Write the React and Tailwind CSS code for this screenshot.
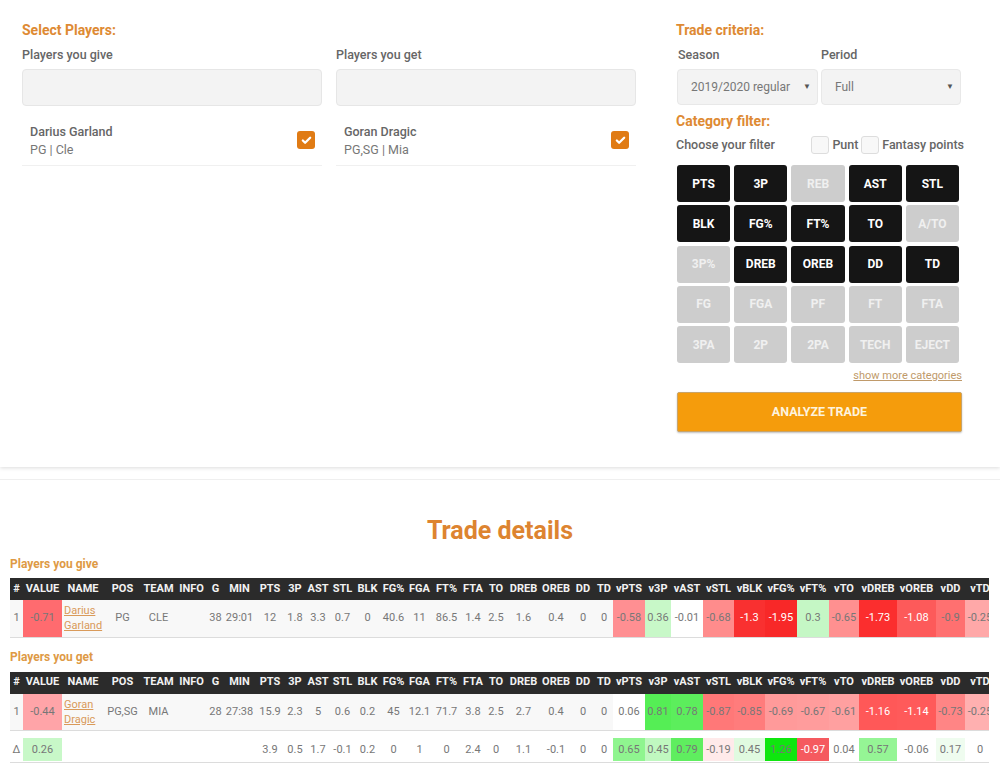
import { Check } from "lucide-react";

const categories = [
  ["PTS", 1], ["3P", 1], ["REB", 0], ["AST", 1], ["STL", 1],
  ["BLK", 1], ["FG%", 1], ["FT%", 1], ["TO", 1], ["A/TO", 0],
  ["3P%", 0], ["DREB", 1], ["OREB", 1], ["DD", 1], ["TD", 1],
  ["FG", 0], ["FGA", 0], ["PF", 0], ["FT", 0], ["FTA", 0],
  ["3PA", 0], ["2P", 0], ["2PA", 0], ["TECH", 0], ["EJECT", 0],
];

const columns = [
  ["#", 13], ["VALUE", 39], ["NAME", 42], ["POS", 37], ["TEAM", 35], ["INFO", 31], ["G", 17], ["MIN", 31],
  ["PTS", 30], ["3P", 20], ["AST", 26], ["STL", 23], ["BLK", 27], ["FG%", 25], ["FGA", 27], ["FT%", 27],
  ["FTA", 26], ["TO", 20], ["DREB", 35], ["OREB", 30], ["DD", 24], ["TD", 18], ["vPTS", 32], ["v3P", 26],
  ["vAST", 32], ["vSTL", 31], ["vBLK", 31], ["vFG%", 32], ["vFT%", 32], ["vTO", 30], ["vDREB", 38],
  ["vOREB", 39], ["vDD", 29], ["vTD", 30],
];

// [value, background class, white text]
const garland = [
  ["1"], ["-0.71", "bg-[#ff6b6f]"], ["Darius Garland"], ["PG"], ["CLE"], [""], ["38"], ["29:01"],
  ["12"], ["1.8"], ["3.3"], ["0.7"], ["0"], ["40.6"], ["11"], ["86.5"], ["1.4"], ["2.5"], ["1.6"], ["0.4"], ["0"], ["0"],
  ["-0.58", "bg-[#ff8f92]"], ["0.36", "bg-[#c8f8c8]"], ["-0.01", "bg-white"], ["-0.68", "bg-[#ff8c8c]"],
  ["-1.3", "bg-[#f93030]", 1], ["-1.95", "bg-[#f82828]", 1], ["0.3", "bg-[#c5f7c5]"], ["-0.65", "bg-[#ff9090]"],
  ["-1.73", "bg-[#fb2e2e]", 1], ["-1.08", "bg-[#fd5a5a]", 1], ["-0.9", "bg-[#ff7070]"], ["-0.25", "bg-[#ffa8a8]"],
];

const dragic = [
  ["1"], ["-0.44", "bg-[#ffa4a8]"], ["Goran Dragic"], ["PG,SG"], ["MIA"], [""], ["28"], ["27:38"],
  ["15.9"], ["2.3"], ["5"], ["0.6"], ["0.2"], ["45"], ["12.1"], ["71.7"], ["3.8"], ["2.5"], ["2.7"], ["0.4"], ["0"], ["0"],
  ["0.06", "bg-white"], ["0.81", "bg-[#55ee55]"], ["0.78", "bg-[#5cee5c]"], ["-0.87", "bg-[#ff7878]"],
  ["-0.85", "bg-[#ff7c7c]"], ["-0.69", "bg-[#ff9a9a]"], ["-0.67", "bg-[#ff9c9c]"], ["-0.61", "bg-[#ffa0a0]"],
  ["-1.16", "bg-[#ff5858]", 1], ["-1.14", "bg-[#ff5a5a]", 1], ["-0.73", "bg-[#ff8585]"], ["-0.25", "bg-[#ffb0b0]"],
];

const delta = [
  ["Δ"], ["0.26", "bg-[#c8f8c8]"], [""], [""], [""], [""], [""], [""],
  ["3.9"], ["0.5"], ["1.7"], ["-0.1"], ["0.2"], ["0"], ["1"], ["0"], ["2.4"], ["0"], ["1.1"], ["-0.1"], ["0"], ["0"],
  ["0.65", "bg-[#8ff58f]"], ["0.45", "bg-[#c0f8c0]"], ["0.79", "bg-[#5fee5f]"], ["-0.19", "bg-[#ffeaea]"],
  ["0.45", "bg-[#e0fae0]"], ["1.26", "bg-[#0fe60f]"], ["-0.97", "bg-[#f55a5f]", 1], ["0.04"],
  ["0.57", "bg-[#95f595]"], ["-0.06"], ["0.17", "bg-[#effcef]"], ["0"],
];

const PlayerCard = ({ name, info }) => (
  <div className="flex items-center justify-between h-[53px] border-b border-[#f0f0f0] pl-2 pr-[7px]">
    <div className="pt-[3px]">
      <div className="text-[12.5px] font-medium leading-[18px] text-[#666]">{name}</div>
      <div className="text-[12.5px] leading-[18px] text-[#777]">{info}</div>
    </div>
    <span className="flex items-center justify-center w-[18px] h-[18px] mt-[2px] rounded-[3px] bg-[#e07b14]">
      <Check size={11} strokeWidth={5} color="#fff" />
    </span>
  </div>
);

const SelectBox = ({ label, width, pad }) => (
  <div className={`flex items-center justify-between h-9 rounded-[4px] border border-[#e8e8e8] bg-[#f3f3f3] pr-[6px] text-xs text-[#777] ${width} ${pad}`}>
    <span>{label}</span>
    <span className="text-[8px] text-[#555]">▼</span>
  </div>
);

const StatTable = ({ rows }) => (
  <div className="w-[979px] overflow-hidden">
    <table className="table-fixed border-collapse w-[985px] text-[11px] text-center">
      <colgroup>
        {columns.map(([name, width]) => (
          <col key={name} style={{ width }} />
        ))}
      </colgroup>
      <thead>
        <tr className="h-[22px] bg-[#2b2b2b] text-[#f2f2f2]">
          {columns.map(([name]) => (
            <th key={name} className="p-0 font-bold whitespace-nowrap">{name}</th>
          ))}
        </tr>
      </thead>
      <tbody>
        {rows.map((row, r) => (
          <tr key={r} className="h-[37px] bg-[#f8f8f8] border-b border-[#dcdcdc] text-[#777]">
            {row.map(([value, bg, white], i) => (
              <td key={i} className={`p-0 whitespace-nowrap ${bg || ""} ${white ? "text-white" : ""}`}>
                {i === 2 ? (
                  <a href="#" className="block w-[40px] ml-[2px] whitespace-normal text-left leading-[15px] underline text-[#d99a5a]">{value}</a>
                ) : (
                  value
                )}
              </td>
            ))}
          </tr>
        ))}
      </tbody>
    </table>
  </div>
);

const DeltaTable = () => (
  <div className="w-[979px] overflow-hidden">
    <table className="table-fixed border-collapse w-[985px] text-[11px] text-center">
      <colgroup>
        {columns.map(([name, width]) => (
          <col key={name} style={{ width }} />
        ))}
      </colgroup>
      <tbody>
        <tr className="border-b border-[#dcdcdc] text-[#777]">
          {delta.map(([value, bg, white], i) => (
            <td key={i} className="p-0 pt-[7px] pb-px whitespace-nowrap">
              <div className={`h-[23px] leading-[23px] ${bg || ""} ${white ? "text-white" : ""}`}>{value}</div>
            </td>
          ))}
        </tr>
      </tbody>
    </table>
  </div>
);

export default function App() {
  return (
    <div className="h-[763px] overflow-hidden bg-white font-[family-name:Roboto,sans-serif]">
      <section className="flex h-[467px] shadow-[0_1px_4px_rgba(0,0,0,0.14)] pt-[22px] pl-[22px]">
        <div className="w-[614px]">
          <h2 className="text-sm font-bold leading-4 text-[#de8a33]">Select Players:</h2>
          <div className="grid grid-cols-2 gap-x-[14px] mt-[9px]">
            {[
              ["Players you give", "Darius Garland", "PG | Cle"],
              ["Players you get", "Goran Dragic", "PG,SG | Mia"],
            ].map(([label, name, info]) => (
              <div key={label}>
                <label className="block text-[12.5px] font-medium leading-4 text-[#666]">{label}</label>
                <div className="h-[37px] mt-[6px] rounded-[4px] border border-[#e6e6e6] bg-[#f3f3f3]" />
                <div className="mt-[7px]">
                  <PlayerCard name={name} info={info} />
                </div>
              </div>
            ))}
          </div>
        </div>

        <div className="w-[288px] ml-[40px]">
          <h2 className="text-sm font-bold leading-4 text-[#de8a33]">Trade criteria:</h2>
          <div className="flex gap-[3px] mt-[9px] ml-px">
            <div className="w-[141px]">
              <label className="block pl-px text-[12.5px] font-medium leading-4 text-[#666]">Season</label>
              <div className="mt-[6px]">
                <SelectBox label="2019/2020 regular" width="w-[141px]" pad="pl-[13px]" />
              </div>
            </div>
            <div className="w-[140px]">
              <label className="block text-[12.5px] font-medium leading-4 text-[#666]">Period</label>
              <div className="mt-[6px]">
                <SelectBox label="Full" width="w-[140px]" pad="pl-[13px]" />
              </div>
            </div>
          </div>

          <h2 className="mt-2 text-sm font-bold leading-4 text-[#de8a33]">Category filter:</h2>
          <div className="flex items-center h-[18px] mt-[7px] text-[12.5px] font-medium text-[#666]">
            <span className="w-[136px]">Choose your filter</span>
            <span className="w-[18px] h-[18px] rounded-[3px] border border-[#ddd] bg-[#f8f8f8]" />
            <span className="ml-[3px] w-[29px]">Punt</span>
            <span className="w-[18px] h-[18px] rounded-[3px] border border-[#ddd] bg-[#f8f8f8]" />
            <span className="ml-[3px] whitespace-nowrap">Fantasy points</span>
          </div>

          <div className="grid grid-cols-5 gap-x-1 gap-y-[3.25px] w-[282px] mt-[11px] ml-px">
            {categories.map(([name, active]) => (
              <button
                key={name}
                className={`h-[37px] rounded-[3px] text-xs font-bold ${
                  active ? "bg-[#151515] text-white" : "bg-[#cdcdcd] text-[#f0f0f0]"
                }`}
              >
                {name}
              </button>
            ))}
          </div>

          <div className="w-[286px] mt-[6px] text-right text-[11px] leading-[14px] underline text-[#c09a6a]">
            show more categories
          </div>
          <button className="block w-[285px] h-10 mt-[9px] ml-px rounded-[2px] border border-[#c9a469] bg-[#f59c0c] text-[12.5px] font-bold text-[#fdf3df] shadow-[0_1px_2px_rgba(0,0,0,0.25)]">
            ANALYZE TRADE
          </button>
        </div>
      </section>

      <section className="mt-3 border-t border-[#efefef] pl-[10px]">
        <h1 className="mt-[36px] text-center text-[25px] leading-[30px] font-bold text-[#dd8430] -ml-[10px]">Trade details</h1>
        <h3 className="mt-[10px] text-xs font-bold leading-4 text-[#de9a45]">Players you give</h3>
        <div className="mt-[6px]">
          <StatTable rows={[garland]} />
        </div>
        <h3 className="mt-[11px] text-xs font-bold leading-4 text-[#de9a45]">Players you get</h3>
        <div className="mt-[7px]">
          <StatTable rows={[dragic]} />
          <DeltaTable />
        </div>
      </section>
    </div>
  );
}
